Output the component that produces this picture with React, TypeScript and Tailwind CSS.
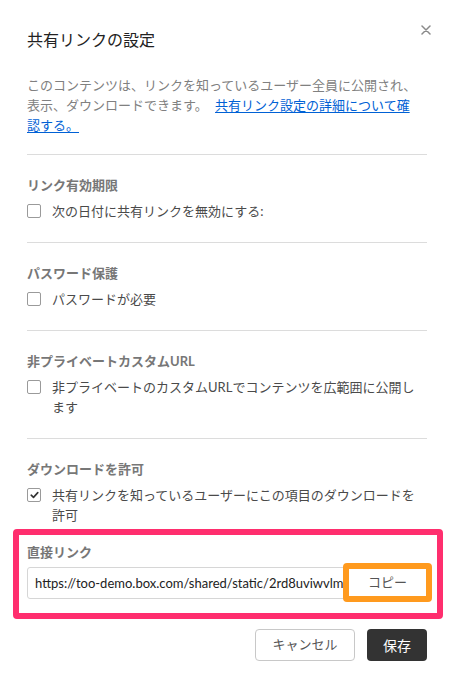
import React from 'react'

const FONT = 'font-[Lato,"Noto_Sans_CJK_JP",sans-serif]'

function Checkbox({ checked }: { checked?: boolean }) {
  return (
    <span className="mt-[3px] flex h-[14px] w-[14px] shrink-0 items-center justify-center rounded-[2px] border border-[#9a9a9a] bg-white">
      {checked && (
        <svg width="9" height="8" viewBox="0 0 9 8" fill="none">
          <path d="M1.2 4.2 L3.5 6.4 L7.8 1.6" stroke="#333" strokeWidth="1.6" strokeLinecap="round" strokeLinejoin="round" />
        </svg>
      )}
    </span>
  )
}

function Section({
  title,
  label,
  checked,
  last,
}: {
  title: string
  label: string
  checked?: boolean
  last?: boolean
}) {
  return (
    <div className={`border-t border-[#dcdcdc] pt-[20px] ${last ? 'pb-[4px]' : 'pb-[21px]'}`}>
      <p className="text-[13px] font-bold leading-5 text-[#777]">{title}</p>
      <label className="mt-[6px] flex items-start gap-[11px]">
        <Checkbox checked={checked} />
        <span className="w-[372px] text-[13px] leading-5 text-[#4a4a4a]">{label}</span>
      </label>
    </div>
  )
}

export default function App() {
  return (
    <div className={`${FONT} h-[688px] w-[456px] bg-white pl-[27px] pr-[29px] pt-[28px]`}>
      {/* Header */}
      <div className="flex items-start justify-between">
        <h2 className="text-[16px] leading-6 text-[#222]">共有リンクの設定</h2>
        <button className="-mr-[4px] -mt-[3px] flex h-[10px] w-[10px] items-center justify-center">
          <svg width="10" height="10" viewBox="0 0 10 10">
            <path d="M1 1 L9 9 M9 1 L1 9" stroke="#8a8a8a" strokeWidth="1.5" strokeLinecap="round" />
          </svg>
        </button>
      </div>

      <p className="mt-[23px] w-[393px] text-[13px] leading-5 text-[#808080]">
        このコンテンツは、リンクを知っているユーザー全員に公開され、表示、ダウンロードできます。{' '}
        <a className="ml-[4px] text-[#0061d5] underline underline-offset-2">共有リンク設定の詳細について確認する。</a>
      </p>

      <div className="mt-[19px]">
        <Section title="リンク有効期限" label="次の日付に共有リンクを無効にする:" />
        <Section title="パスワード保護" label="パスワードが必要" />
        <Section title="非プライベートカスタムURL" label="非プライベートのカスタムURLでコンテンツを広範囲に公開します" />
        <Section
          title="ダウンロードを許可"
          label="共有リンクを知っているユーザーにこの項目のダウンロードを許可"
          checked
          last
        />
      </div>

      {/* Direct link, highlighted */}
      <div className="-ml-[14px] -mr-[16px] rounded-[4px] border-[6px] border-[#ff2e6e] pb-[11px] pl-[8px] pr-[10px] pt-[7px]">
        <p className="text-[13px] font-bold leading-5 text-[#777]">直接リンク</p>
        <div className="mt-[1px] flex items-center">
          <input
            readOnly
            value="https://too-demo.box.com/shared/static/2rd8uviwvlm4p1qz8kq2a0xw3r.pdf"
            className="h-8 w-[318px] shrink-0 rounded-l-[3px] border border-[#d6d6d6] bg-white pl-[7px] text-[13px] text-[#222] outline-none"
          />
          <button className="-ml-[2px] flex h-[39px] w-[89px] shrink-0 items-center justify-center rounded-[4px] border-[6px] border-[#ff9a1e] bg-white text-[13px] text-[#555]">
            コピー
          </button>
        </div>
      </div>

      {/* Footer */}
      <div className="mt-[10px] flex justify-end gap-3">
        <button className="h-8 w-[100px] rounded-[4px] border border-[#c8c8c8] bg-white text-[13px] text-[#555]">
          キャンセル
        </button>
        <button className="h-8 w-[60px] rounded-[4px] bg-[#333] text-[14px] text-white">保存</button>
      </div>
    </div>
  )
}
